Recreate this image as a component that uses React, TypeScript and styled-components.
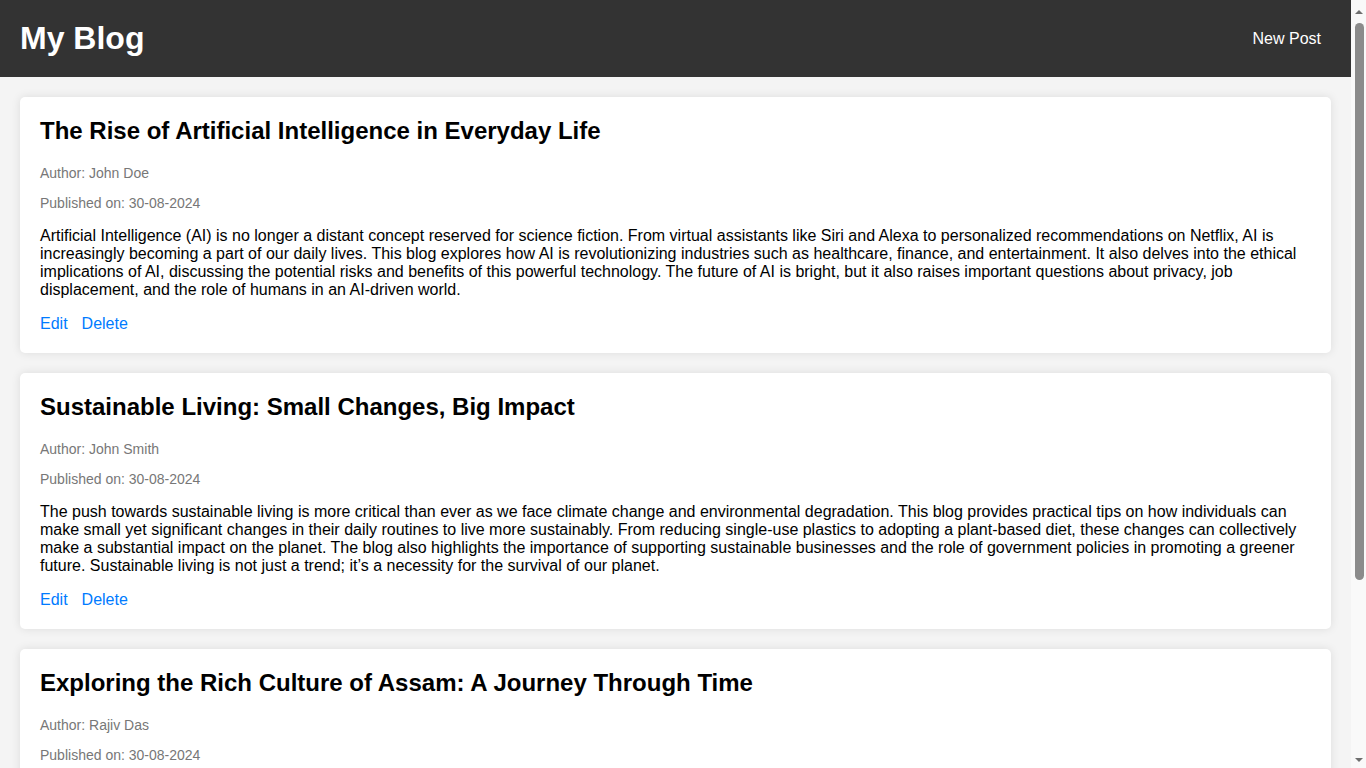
import React from "react";
import styled, { createGlobalStyle } from "styled-components";

const GlobalStyle = createGlobalStyle`
  html, body {
    margin: 0;
    padding: 0;
  }
  body {
    font-family: "Liberation Sans", Arial, sans-serif;
    background: #f4f4f4;
    color: #000;
    margin-right: 15px;
  }
`;

const Header = styled.header`
  display: flex;
  align-items: center;
  justify-content: space-between;
  background: #333;
  color: #fff;
  padding: 20px;
`;

const Logo = styled.h1`
  margin: 0;
  font-size: 32px;
  font-weight: bold;
  line-height: normal;
`;

const NavLink = styled.a`
  color: #fff;
  text-decoration: none;
  font-size: 16px;
  padding: 0 10px;
  cursor: pointer;
`;

const Main = styled.main`
  display: flex;
  flex-direction: column;
  gap: 20px;
  padding: 20px;
`;

const Card = styled.article`
  background: #fff;
  border-radius: 5px;
  box-shadow: 0 0 10px rgba(0, 0, 0, 0.1);
  padding: 20px;
`;

const Title = styled.h2`
  margin: 0 0 20px;
  font-size: 24px;
  font-weight: bold;
  line-height: normal;
`;

const Meta = styled.p`
  margin: 0 0 14px;
  font-size: 14px;
  color: #777;
  line-height: normal;
`;

const Content = styled.p`
  margin: 16px 0;
  font-size: 16px;
  line-height: normal;
`;

const Actions = styled.div`
  display: flex;
  gap: 14px;
  font-size: 16px;
  line-height: normal;
`;

const ActionLink = styled.a`
  color: #007bff;
  text-decoration: none;
  cursor: pointer;
`;

/* Window scrollbar, drawn over the right edge of the page */
const ScrollTrack = styled.div`
  position: fixed;
  top: 0;
  right: 0;
  width: 15px;
  height: 100vh;
  background: #f9f9f9;
  display: flex;
  flex-direction: column;
  align-items: center;
`;

const ScrollButton = styled.div<{ $down?: boolean }>`
  height: 17px;
  width: 15px;
  flex: none;
  display: flex;
  justify-content: center;
  align-items: ${(p) => (p.$down ? "flex-start" : "flex-end")};
  box-sizing: border-box;
  padding: ${(p) => (p.$down ? "7px 0 0" : "0 0 3px")};

  &::before {
    content: "";
    width: 0;
    height: 0;
    border-left: 4px solid transparent;
    border-right: 4px solid transparent;
    ${(p) =>
      p.$down
        ? "border-top: 4px solid #6e6e6e;"
        : "border-bottom: 4px solid #6e6e6e;"}
  }
`;

const ScrollThumb = styled.div`
  width: 9px;
  height: 557px;
  margin-top: 6px;
  margin-left: 1px;
  border-radius: 5px;
  background: #8b8b8b;
  flex: none;
`;

const ScrollSpacer = styled.div`
  flex: 1;
`;

type Post = {
  title: string;
  author: string;
  date: string;
  content: string;
};

const posts: Post[] = [
  {
    title: "The Rise of Artificial Intelligence in Everyday Life",
    author: "John Doe",
    date: "30-08-2024",
    content:
      "Artificial Intelligence (AI) is no longer a distant concept reserved for science fiction. From virtual assistants like Siri and Alexa to personalized recommendations on Netflix, AI is increasingly becoming a part of our daily lives. This blog explores how AI is revolutionizing industries such as healthcare, finance, and entertainment. It also delves into the ethical implications of AI, discussing the potential risks and benefits of this powerful technology. The future of AI is bright, but it also raises important questions about privacy, job displacement, and the role of humans in an AI-driven world.",
  },
  {
    title: "Sustainable Living: Small Changes, Big Impact",
    author: "John Smith",
    date: "30-08-2024",
    content:
      "The push towards sustainable living is more critical than ever as we face climate change and environmental degradation. This blog provides practical tips on how individuals can make small yet significant changes in their daily routines to live more sustainably. From reducing single-use plastics to adopting a plant-based diet, these changes can collectively make a substantial impact on the planet. The blog also highlights the importance of supporting sustainable businesses and the role of government policies in promoting a greener future. Sustainable living is not just a trend; it\u2019s a necessity for the survival of our planet.",
  },
  {
    title: "Exploring the Rich Culture of Assam: A Journey Through Time",
    author: "Rajiv Das",
    date: "30-08-2024",
    content:
      "Assam, located in the northeastern part of India, is a land of breathtaking landscapes, vibrant traditions, and a rich cultural heritage that dates back thousands of years. Known for its lush tea gardens, the mighty Brahmaputra River, and the one-horned rhinoceros of Kaziranga National Park, Assam offers a unique blend of natural beauty and cultural diversity. This blog takes you on a journey through the history of Assam, from the ancient Kamarupa kingdom to the glorious reign of the Ahom dynasty, which ruled the region for nearly six hundred years. We explore the colourful festivals of Bihu, which mark the changing seasons and the agricultural cycle, and the graceful Bihu dance performed by young men and women in traditional attire. The blog also delves into the exquisite silk weaving traditions of Sualkuchi, where artisans create the famous Muga and Pat silk, as well as the distinctive Assamese cuisine, known for its simple yet flavourful dishes. Finally, we look at the spiritual heritage of the state, from the Kamakhya Temple atop Nilachal Hill to the Vaishnavite satras of Majuli, and reflect on how the people of Assam preserve their traditions while embracing the modern world.",
  },
];

export default function App() {
  return (
    <>
      <GlobalStyle />
      <Header>
        <Logo>My Blog</Logo>
        <NavLink href="#">New Post</NavLink>
      </Header>
      <Main>
        {posts.map((post) => (
          <Card key={post.title}>
            <Title>{post.title}</Title>
            <Meta>Author: {post.author}</Meta>
            <Meta>Published on: {post.date}</Meta>
            <Content>{post.content}</Content>
            <Actions>
              <ActionLink href="#">Edit</ActionLink>
              <ActionLink href="#">Delete</ActionLink>
            </Actions>
          </Card>
        ))}
      </Main>
      <ScrollTrack aria-hidden="true">
        <ScrollButton />
        <ScrollThumb />
        <ScrollSpacer />
        <ScrollButton $down />
      </ScrollTrack>
    </>
  );
}
